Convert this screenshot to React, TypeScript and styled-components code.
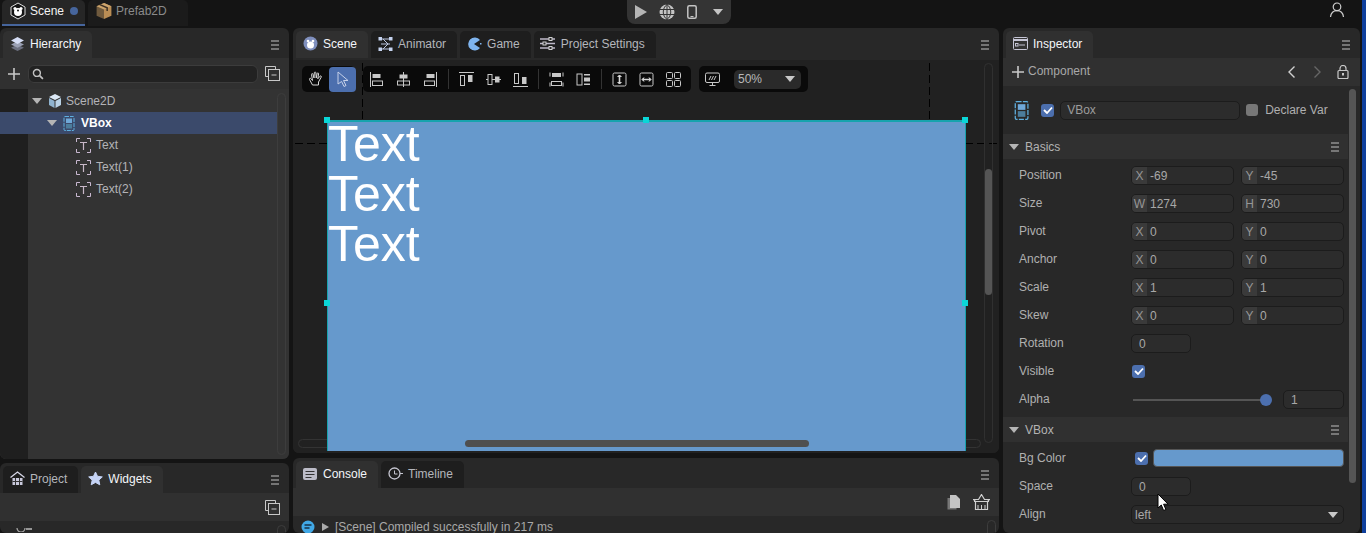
import React from "react";
import styled, { createGlobalStyle } from "styled-components";

const Global = createGlobalStyle`
  html, body { margin: 0; padding: 0; background: #141414; overflow: hidden; }
  body { font-family: "Liberation Sans", Arial, sans-serif; font-size: 12px; }
  * { box-sizing: border-box; }
`;

const Root = styled.div`
  position: relative;
  width: 1366px;
  height: 533px;
  display: flex;
  flex-direction: column;
  overflow: hidden;
  background: #141414;
`;
const EdgeStrip = styled.div`
  position: absolute;
  right: 0;
  top: 0;
  bottom: 0;
  width: 4px;
  background: #0f3f9c;
`;
const TopBar = styled.header`
  position: relative;
  height: 28px;
  flex: none;
  display: flex;
  padding-left: 2px;
  gap: 3px;
`;
const DocTab = styled.div<{ $active?: boolean; $w: number }>`
  width: ${(p) => p.$w}px;
  height: 26px;
  display: flex;
  align-items: center;
  gap: 3px;
  padding: 0 0 2px 7px;
  font-size: 12px;
  color: ${(p) => (p.$active ? "#f2f2f2" : "#8b8b8b")};
  background: ${(p) => (p.$active ? "#262626" : "#1b1b1b")};
  border-bottom: 2px solid ${(p) => (p.$active ? "#46659c" : "#1b1b1b")};
  border-radius: 5px 5px 0 0;
`;
const Dot = styled.span`
  width: 8px;
  height: 8px;
  border-radius: 50%;
  background: #46659c;
  margin-left: 3px;
`;
const PlayBar = styled.div`
  position: absolute;
  left: 627px;
  top: 0;
  width: 104px;
  height: 24px;
  background: #343434;
  border-radius: 0 0 8px 8px;
  display: flex;
  align-items: center;
  padding-left: 1.5px;
`;
const PlayCell = styled.span`
  width: 25.5px;
  display: flex;
  align-items: center;
  justify-content: center;
`;
const UserSlot = styled.div`
  position: absolute;
  left: 1329px;
  top: 2px;
  display: flex;
`;
const Main = styled.main`
  display: flex;
  gap: 4px;
  width: 1360px;
  height: 505px;
`;
const Column = styled.div<{ $w: number; $gap: number }>`
  width: ${(p) => p.$w}px;
  flex: none;
  display: flex;
  flex-direction: column;
  gap: ${(p) => p.$gap}px;
`;
const Panel = styled.section<{ $h: number }>`
  height: ${(p) => p.$h}px;
  flex: none;
  background: #282828;
  border-radius: 6px;
  display: flex;
  flex-direction: column;
  overflow: hidden;
`;
const TabHeader = styled.div`
  height: 30px;
  flex: none;
  display: flex;
  align-items: flex-end;
  gap: 3px;
  padding-left: 3px;
  position: relative;
`;
const Tab = styled.div<{ $active?: boolean }>`
  height: 27px;
  display: flex;
  align-items: center;
  gap: 5px;
  padding: 0 11px 2px 6px;
  color: ${(p) => (p.$active ? "#f4f6fa" : "#b4b6bc")};
  background: ${(p) => (p.$active ? "#303030" : "#1e1e1e")};
  border-radius: 5px 5px 0 0;
`;
const TabIconBox = styled.span`
  width: 16px;
  height: 16px;
  display: flex;
  align-items: center;
  justify-content: center;
`;
const MenuSlot = styled.span`
  margin-left: auto;
  margin-right: 10px;
  align-self: center;
  margin-top: 3px;
  display: flex;
`;
const ToolStrip = styled.div<{ $h: number }>`
  height: ${(p) => p.$h}px;
  flex: none;
  background: #303030;
  display: flex;
  align-items: center;
`;
const PlusSlot = styled.span<{ $w?: number }>`
  width: ${(p) => p.$w ?? 28}px;
  display: flex;
  justify-content: center;
`;
const SearchBox = styled.div`
  width: 230px;
  height: 18px;
  background: #222;
  border: 1px solid #3c3c3c;
  border-radius: 6px;
  display: flex;
  align-items: center;
  padding-left: 3px;
`;
const RightAction = styled.span<{ $mr: number; $auto?: boolean }>`
  margin-left: ${(p) => (p.$auto ? "auto" : "0")};
  margin-right: ${(p) => p.$mr}px;
  display: flex;
`;
const TreeArea = styled.div`
  flex: 1;
  display: flex;
  background: #333;
  position: relative;
`;
const Gutter = styled.div`
  width: 28px;
  background: #1f1f1f;
`;
const TreeList = styled.div`
  position: absolute;
  left: 0;
  top: 0;
  width: 277px;
  padding-top: 1px;
`;
const TreeRow = styled.div<{ $indent: number; $sel?: boolean }>`
  height: 22px;
  padding-left: ${(p) => p.$indent}px;
  display: flex;
  align-items: center;
  color: ${(p) => (p.$sel ? "#fff" : "#b3b3b8")};
  font-weight: ${(p) => (p.$sel ? 700 : 400)};
  background: ${(p) => (p.$sel ? "#3b4a6b" : "transparent")};
`;
const Arrow = styled.span<{ $color?: string }>`
  width: 0;
  height: 0;
  border-left: 5px solid transparent;
  border-right: 5px solid transparent;
  border-top: 6px solid ${(p) => p.$color || "#b5b5b5"};
`;
const TreeIcon = styled.span<{ $ml: number; $mr: number }>`
  margin-left: ${(p) => p.$ml}px;
  margin-right: ${(p) => p.$mr}px;
  display: flex;
`;
const ScrollTrackV = styled.div<{ $right: number; $top: number; $bottom: number; $color?: string }>`
  position: absolute;
  right: ${(p) => p.$right}px;
  top: ${(p) => p.$top}px;
  bottom: ${(p) => p.$bottom}px;
  width: 9px;
  border: 1px solid ${(p) => p.$color ?? "#3d3d3d"};
  border-radius: 5px;
`;
const Canvas = styled.div`
  position: relative;
  margin-top: 2px;
  flex: 1;
  background: #212121;
  overflow: hidden;
`;
const ToolRow = styled.div`
  position: absolute;
  z-index: 3;
  left: 9px;
  top: 6px;
  display: flex;
  gap: 8px;
`;
const ToolGroup = styled.div<{ $w: number }>`
  height: 26px;
  background: #0a0a0a;
  border-radius: 5px;
  display: flex;
  align-items: center;
  width: ${(p) => p.$w}px;
`;
const ToolBtn = styled.span<{ $active?: boolean }>`
  width: 27px;
  height: 25px;
  flex: none;
  display: flex;
  align-items: center;
  justify-content: center;
  border-radius: 4px;
  background: ${(p) => (p.$active ? "#4c6fae" : "transparent")};
`;
const ToolSep = styled.span`
  width: 1px;
  height: 20px;
  margin: 0 4px;
  background: #333;
`;
const ZoomSelect = styled.div`
  width: 67px;
  height: 19px;
  margin-left: 8px;
  background: #2a2a2a;
  border-radius: 5px;
  color: #b8b8b8;
  display: flex;
  align-items: center;
  justify-content: space-between;
  padding: 0 6px 0 4px;
`;
const Guide = styled.div<{ $x: number; $y: number; $len: number; $v?: boolean }>`
  position: absolute;
  left: ${(p) => p.$x}px;
  top: ${(p) => p.$y}px;
  ${(p) =>
    p.$v
      ? `width:1px;height:${p.$len}px;background:repeating-linear-gradient(180deg,#000 0 8px,transparent 8px 12px);`
      : `height:1px;width:${p.$len}px;background:repeating-linear-gradient(90deg,#000 0 8px,transparent 8px 12px);`}
`;
const Stage = styled.div`
  position: absolute;
  left: 34px;
  top: 60px;
  width: 639px;
  height: 331px;
  background: #6699cc;
  border-top: 2px solid #17a3ad;
  border-left: 1px solid #17a3ad;
  border-right: 1px solid #17a3ad;
  color: #fff;
  font-size: 50px;
  line-height: 50px;
`;
const StageText = styled.div`
  margin-top: -3px;
`;
const Handle = styled.span<{ $x: number; $y: number }>`
  position: absolute;
  z-index: 2;
  left: ${(p) => p.$x - 3}px;
  top: ${(p) => p.$y - 3}px;
  width: 6px;
  height: 6px;
  background: #0ad6d8;
`;
const HTrack = styled.div`
  position: absolute;
  left: 5px;
  width: 683px;
  top: 379px;
  height: 9px;
  border: 1px solid #333;
  border-radius: 5px;
`;
const HThumb = styled.div`
  position: absolute;
  z-index: 2;
  left: 172px;
  width: 344px;
  top: 380px;
  height: 7px;
  background: #4f4f4f;
  border-radius: 4px;
`;
const VThumb = styled.div<{ $right: number; $top: number; $h: number }>`
  position: absolute;
  z-index: 2;
  right: ${(p) => p.$right}px;
  top: ${(p) => p.$top}px;
  height: ${(p) => p.$h}px;
  width: 7px;
  background: #555;
  border-radius: 4px;
`;
const LogArea = styled.div`
  position: relative;
  flex: 1;
  display: flex;
  align-items: flex-start;
  padding: 4px 0 0 8px;
  color: #a9a9a9;
`;
const LogTri = styled.span`
  width: 0;
  height: 0;
  margin: 3px 6px 0 7px;
  border-top: 4px solid transparent;
  border-bottom: 4px solid transparent;
  border-left: 7px solid #aaa;
`;
const ClippedIcons = styled.div`
  position: relative;
  flex: 1;
  padding-left: 15px;
  overflow: hidden;
`;
const Inspector = styled.div`
  position: relative;
  flex: 1;
  overflow: hidden;
`;
const InspBody = styled.div`
  width: 345px;
`;
const NameRow = styled.div`
  height: 48px;
  display: flex;
  align-items: center;
  padding-left: 11px;
`;
const NameInput = styled.div`
  width: 180px;
  height: 19px;
  margin-left: 6px;
  margin-right: 6px;
  background: #2c2c2c;
  border: 1px solid #1c1c1c;
  border-radius: 5px;
  color: #9c9c9c;
  display: flex;
  align-items: center;
  padding-left: 6px;
`;
const Check = styled.span<{ $ml?: number }>`
  width: 13px;
  height: 13px;
  margin-left: ${(p) => p.$ml ?? 0}px;
  border-radius: 3px;
  background: #4c6fae;
  display: flex;
  align-items: center;
  justify-content: center;
  flex: none;
`;
const GreyBox = styled.span`
  width: 12px;
  height: 12px;
  border-radius: 3px;
  background: #777;
  margin-right: 7px;
`;
const DeclareLabel = styled.span`
  color: #b0b0b0;
`;
const SectionHead = styled.div<{ $mt?: number }>`
  height: 25px;
  margin-top: ${(p) => p.$mt ?? 0}px;
  background: #303030;
  display: flex;
  align-items: center;
  padding-left: 6px;
  color: #b3b3b3;
`;
const SectionName = styled.span`
  margin-left: 6px;
`;
const PropRow = styled.div<{ $first?: boolean }>`
  height: ${(p) => (p.$first ? 30 : 28)}px;
  padding-top: ${(p) => (p.$first ? 2 : 0)}px;
  display: flex;
  align-items: center;
  padding-left: 16px;
`;
const PropLabel = styled.span`
  width: 112px;
  flex: none;
  color: #b0b0b0;
  margin-top: -1px;
`;
const FieldGrid = styled.div`
  display: flex;
  gap: 7px;
`;
const Field = styled.div<{ $w?: number }>`
  width: ${(p) => p.$w ?? 103}px;
  height: 19px;
  background: #2c2c2c;
  border: 1px solid #1c1c1c;
  border-radius: 5px;
  color: #a8a8a8;
  display: flex;
  align-items: center;
  overflow: hidden;
  padding-top: 1px;
`;
const Prefix = styled.span`
  width: 15px;
  height: 17px;
  margin-top: -1px;
  margin-right: 3px;
  background: #3a3a3a;
  color: #969696;
  text-align: center;
  line-height: 18px;
`;
const Plain = styled.span`
  padding-left: 7px;
`;
const Slider = styled.div`
  position: relative;
  width: 133px;
  height: 12px;
  margin-left: 2px;
  margin-right: 17px;
  margin-top: 2px;
  display: flex;
  align-items: center;
`;
const SliderLine = styled.span`
  display: block;
  width: 100%;
  height: 2px;
  background: #555;
`;
const SliderThumb = styled.span`
  position: absolute;
  right: -6px;
  top: 0;
  width: 12px;
  height: 12px;
  border-radius: 50%;
  background: #4c6fae;
`;
const Swatch = styled.div`
  width: 191px;
  height: 18px;
  margin-left: 5px;
  background: #6699cc;
  border: 1px solid #555;
  border-radius: 4px;
`;
const Select = styled.div`
  width: 213px;
  height: 19px;
  background: #2a2a2a;
  border: 1px solid #1c1c1c;
  border-radius: 5px;
  color: #a8a8a8;
  display: flex;
  align-items: center;
  justify-content: space-between;
  padding: 1px 5px 0 3px;
`;
const ComponentLabel = styled.span`
  color: #a8a8a8;
  margin-left: -5px;
  margin-top: -2px;
`;
const CursorSlot = styled.div`
  position: absolute;
  z-index: 10;
  left: 1157px;
  top: 493px;
  display: flex;
`;

const s = { fill: "none", stroke: "#c8c8c8", strokeWidth: 1 } as const;

const Menu = () => (
  <svg width="8" height="10" viewBox="0 0 8 10">
    <path d="M0 1h8M0 5h8M0 9h8" stroke="#8f8f8f" strokeWidth="1.6" />
  </svg>
);
const HexLogo = ({ size = 18 }: { size?: number }) => (
  <svg width={size} height={size} viewBox="0 0 18 18">
    <path d="M9 1l7 4v8l-7 4-7-4V5z" fill="#141414" stroke="#ddd" />
    <circle cx="6" cy="6.5" r="1.6" fill="#fff" />
    <circle cx="12" cy="6.5" r="1.6" fill="#fff" />
    <ellipse cx="9" cy="10" rx="4" ry="4" fill="#fff" />
    <circle cx="9" cy="8.5" r="1" fill="#141414" />
  </svg>
);
const PrefabIcon = () => (
  <svg width="18" height="18" viewBox="0 0 16 17">
    <path d="M8 1l7 3v9l-7 3z" fill="#b98d55" />
    <path d="M8 1L1 4v9l7 3z" fill="#6f5a3e" />
    <path d="M1 4l7 3 7-3-7-3z" fill="#cda46c" />
    <path d="M4 2.5l7 3v3" stroke="#3c3024" strokeWidth="1.4" fill="none" />
  </svg>
);
const Stack = () => (
  <svg width="15" height="15" viewBox="0 0 14 14">
    <path d="M7 8l6 3-6 3-6-3z" fill="#6c7080" />
    <path d="M7 5l6 3-6 3-6-3z" fill="#9aa0b4" />
    <path d="M7 1l6 3.2-6 3.2-6-3.2z" fill="#d5ddf5" />
  </svg>
);
const Plus = ({ size = 12 }: { size?: number }) => (
  <svg width={size} height={size} viewBox="0 0 12 12">
    <path d="M6 0v12M0 6h12" stroke="#c8c8c8" strokeWidth="1.6" />
  </svg>
);
const Search = () => (
  <svg width="12" height="12" viewBox="0 0 11 11">
    <circle cx="4.5" cy="4.5" r="3.2" fill="none" stroke="#c0c0c0" strokeWidth="1.3" />
    <path d="M7 7l3 3" stroke="#c0c0c0" strokeWidth="1.6" />
  </svg>
);
const Collapse = () => (
  <svg width="15" height="15" viewBox="0 0 15 15">
    <path d="M3.5 10.5H.5V.5h10v3" {...s} />
    <rect x="3.5" y="3.5" width="11" height="11" {...s} />
    <path d="M6.5 9h5" {...s} />
  </svg>
);
const Cube = () => (
  <svg width="16" height="16" viewBox="0 0 16 16">
    <path d="M8 1l6 3-6 3-6-3z" fill="#dbe8f5" />
    <path d="M2 5l5.5 3v7L2 12z" fill="#8fb3cf" />
    <path d="M14 5L8.5 8v7l5.5-3z" fill="#b9d2e6" />
  </svg>
);
const VBoxIcon = ({ h = 15 }: { h?: number }) => (
  <svg width={h * 0.8} height={h} viewBox="0 0 12 15">
    <rect x="1" y="0.5" width="10" height="14" rx="1" fill="none" stroke="#5fb0e0" strokeDasharray="4 1" />
    <rect x="3" y="2.5" width="6" height="4.5" fill="#6fa8d8" />
    <rect x="3" y="8" width="6" height="4.5" fill="#4c7d9c" />
  </svg>
);
const TextNode = () => (
  <svg width="15" height="15" viewBox="0 0 15 15">
    <path d="M.5 4V.5H4M11 .5h3.5V4M.5 11v3.5H4M11 14.5h3.5V11" fill="none" stroke="#c8b8d0" />
    <path d="M4 4.5h7M7.5 4.5V12" fill="none" stroke="#c8b8c8" strokeWidth="1.2" />
  </svg>
);
const House = () => (
  <svg width="15" height="15" viewBox="0 0 15 15">
    <path d="M.5 6.5L7.5 1l7 5.5" fill="none" stroke="#d6d6e6" strokeWidth="1.3" />
    <rect x="2.5" y="7" width="10" height="7" fill="#c9c9dc" />
    <path d="M5.5 7v7M9.5 7v7M2.5 10.5h10" stroke="#333" />
  </svg>
);
const Star = () => (
  <svg width="15" height="15" viewBox="0 0 15 15">
    <path d="M7.5 1l2 4.3 4.8.6-3.5 3.2 1 4.7-4.3-2.4-4.3 2.4 1-4.7L.7 5.9l4.8-.6z" fill="#c5d3f5" stroke="#c5d3f5" strokeLinejoin="round" />
  </svg>
);
const SceneBall = () => (
  <svg width="15" height="15" viewBox="0 0 15 15">
    <circle cx="7.5" cy="7.5" r="7" fill="#7f8fbd" />
    <ellipse cx="7.5" cy="9" rx="3.5" ry="3.5" fill="#fff" />
    <circle cx="5" cy="5" r="1.3" fill="#fff" />
    <circle cx="10" cy="5" r="1.3" fill="#fff" />
  </svg>
);
const AnimatorIcon = () => (
  <svg width="15" height="14" viewBox="0 0 15 14">
    <path d="M3 2h9M3 12h9M3 7h9M5 2l5 5-5 5" fill="none" stroke="#bcc6e0" />
    <rect x="0.5" y="0" width="3.5" height="3.5" fill="#c5d3f0" />
    <rect x="11" y="0" width="3.5" height="3.5" fill="#c5d3f0" />
    <rect x="0.5" y="10.5" width="3.5" height="3.5" fill="#c5d3f0" />
    <rect x="11" y="10.5" width="3.5" height="3.5" fill="#c5d3f0" />
  </svg>
);
const GameIcon = () => (
  <svg width="15" height="14" viewBox="0 0 15 14">
    <path d="M7 7L13 3A6.6 6.6 0 1 0 13 11z" fill="#7fb4ee" />
    <rect x="13" y="6" width="1.5" height="1.5" fill="#7fb4ee" />
  </svg>
);
const Sliders = () => (
  <svg width="15" height="13" viewBox="0 0 15 13">
    <path d="M0 2h15M0 6.5h15M0 11h15" stroke="#bdb8c8" strokeWidth="1.3" />
    <rect x="9" y="0.5" width="3" height="3" fill="#2a2a2a" stroke="#d0d0d0" />
    <rect x="3" y="5" width="3" height="3" fill="#2a2a2a" stroke="#d0d0d0" />
    <rect x="9" y="9.5" width="3" height="3" fill="#2a2a2a" stroke="#d0d0d0" />
  </svg>
);
const InspectorIcon = () => (
  <svg width="15" height="13" viewBox="0 0 15 13">
    <rect x="0.5" y="0.5" width="14" height="12" rx="1" fill="#333" stroke="#c5c5d5" />
    <path d="M0.5 3h14" stroke="#c5c5d5" strokeWidth="2" />
    <rect x="2.5" y="6.5" width="2.5" height="2.5" fill="none" stroke="#c5c5d5" />
    <path d="M6 8h6" stroke="#c5c5d5" />
  </svg>
);
const ConsoleIcon = () => (
  <svg width="14" height="12" viewBox="0 0 14 12">
    <rect x="0" y="0" width="14" height="12" rx="2" fill="#bcbcc8" />
    <path d="M2.5 3.5h9M2.5 6.5h9M2.5 9.5h6" stroke="#333" />
  </svg>
);
const Clock = () => (
  <svg width="15" height="13" viewBox="0 0 15 13">
    <circle cx="6.5" cy="6.5" r="5.5" fill="none" stroke="#c5c5d0" strokeWidth="1.3" />
    <path d="M6.5 3.5v3.5h3" fill="none" stroke="#c5c5d0" />
    <path d="M12 6.5h3" stroke="#c5c5d0" />
  </svg>
);
const Hand = () => (
  <svg width="16" height="16" viewBox="0 0 16 16">
    <path d="M4.5 14L1.5 8.5c-.5-1 .8-1.8 1.5-.8L4.5 9.5 3.5 3.5c-.2-1 1.3-1.3 1.5-.2L6 7 6.3 1.8c.1-1 1.5-1 1.6 0L8.2 7l1-4.5c.2-1 1.6-.7 1.4.3L9.8 7.8 12 5.2c.7-.8 1.8.1 1.2 1L10.5 11v3z" fill="none" stroke="#d8d8d8" strokeWidth="1" />
  </svg>
);
const Pointer = () => (
  <svg width="14" height="16" viewBox="0 0 14 16">
    <path d="M2 1l10 8.5H7.5l2.500 5-2 1-2.400-5L2 13z" fill="none" stroke="#c5d0e8" strokeWidth="1" />
  </svg>
);
const Align = ({ d }: { d: React.ReactNode }) => (
  <svg width="15" height="15" viewBox="0 0 15 15">
    {d}
  </svg>
);
const alignIcons: React.ReactNode[] = [
  <><path d="M1.5 0v15" {...s} /><rect x="3.5" y="2" width="8" height="4" fill="#c8c8c8" /><rect x="3.5" y="9" width="10" height="4.5" {...s} /></>,
  <><path d="M7.5 0v15" {...s} /><rect x="3.5" y="2.5" width="8" height="4" fill="#c8c8c8" /><rect x="1.5" y="9" width="12" height="4" {...s} /></>,
  <><path d="M13.5 0v15" {...s} /><rect x="3.5" y="2" width="8" height="4" fill="#c8c8c8" /><rect x="1.5" y="9" width="10" height="4.5" {...s} /></>,
  <><path d="M0 .5h15" {...s} /><rect x="1.5" y="3.5" width="4" height="10" {...s} /><rect x="9" y="3" width="4.5" height="7" fill="#c8c8c8" /></>,
  <><path d="M0 7.5h15" {...s} /><rect x="2" y="2.5" width="4" height="10" fill="#0a0a0a" stroke="#c8c8c8" /><rect x="9" y="4.5" width="4.5" height="6" fill="#c8c8c8" /></>,
  <><path d="M0 14.5h15" {...s} /><rect x="1.5" y="1.5" width="4" height="10" {...s} /><rect x="9" y="5" width="4.5" height="7" fill="#c8c8c8" /></>,
  <><path d="M1 .5v4M14 .5v4M1 10.5v4M14 10.5v4" {...s} /><rect x="3" y="1" width="9" height="4" fill="#c8c8c8" /><rect x="2.5" y="9.5" width="10" height="4" {...s} /></>,
  <><rect x="1" y="2" width="5" height="11" {...s} /><rect x="8" y="2" width="6" height="1.5" fill="#c8c8c8" /><rect x="8" y="5.5" width="6" height="4" fill="#c8c8c8" /><rect x="8" y="11.5" width="6" height="1.5" fill="#c8c8c8" /></>,
  <><rect x="1" y="1" width="13" height="13" rx="1.5" {...s} /><path d="M7.5 3.5v8" stroke="#d8d8d8" strokeWidth="1.6" /><path d="M5.5 5l2-2 2 2M5.5 10l2 2 2-2" fill="#d8d8d8" stroke="#d8d8d8" /></>,
  <><rect x="1" y="1" width="13" height="13" rx="1.5" {...s} /><path d="M3.5 7.5h8" stroke="#d8d8d8" strokeWidth="1.6" /><path d="M5 5.5l-2 2 2 2M10 5.5l2 2-2 2" fill="#d8d8d8" stroke="#d8d8d8" /></>,
  <><rect x="0.5" y="0.5" width="6" height="6" rx="1" {...s} /><rect x="8.5" y="0.5" width="6" height="6" rx="1" {...s} /><rect x="0.5" y="8.5" width="6" height="6" rx="1" {...s} /><rect x="8.5" y="8.5" width="6" height="6" rx="1" {...s} /></>,
];
const Monitor = () => (
  <svg width="15" height="15" viewBox="0 0 15 15">
    <rect x="0.5" y="1" width="14" height="9.5" rx="1.5" {...s} />
    <path d="M4 8l2-4M6.5 8l2-4M9 8l2-4M4.5 13.5h6M7.5 10.5v3" {...s} />
  </svg>
);
const Tick = () => (
  <svg width="10" height="8" viewBox="0 0 10 8">
    <path d="M1 4l3 3 5-5.5" fill="none" stroke="#fff" strokeWidth="1.8" />
  </svg>
);
const Globe = () => (
  <svg width="16" height="16" viewBox="0 0 16 16">
    <circle cx="8" cy="8" r="7.5" fill="#c4c4c4" />
    <path d="M0 5.5h16M0 10.5h16M8 0v16M8 .5c-5 3.5-5 11.5 0 15M8 .5c5 3.5 5 11.5 0 15" fill="none" stroke="#343434" />
  </svg>
);
const Phone = () => (
  <svg width="10" height="14" viewBox="0 0 10 14">
    <rect x="0.8" y="0.8" width="8.4" height="12.4" rx="1.5" fill="none" stroke="#c4c4c4" strokeWidth="1.5" />
    <path d="M3.5 11.5h3" stroke="#c4c4c4" />
  </svg>
);
const User = () => (
  <svg width="16" height="16" viewBox="0 0 16 16">
    <circle cx="8" cy="4.8" r="3.8" fill="none" stroke="#d0d0d0" strokeWidth="1.2" />
    <path d="M1.5 15c.5-4 3-6.3 6.5-6.3s6 2.3 6.5 6.3" fill="none" stroke="#d0d0d0" strokeWidth="1.2" />
  </svg>
);
const Chevron = ({ left, c }: { left?: boolean; c: string }) => (
  <svg width="9" height="12" viewBox="0 0 9 12">
    <path d={left ? "M7.5 .5L2 6l5.5 5.5" : "M1.5 .5L7 6l-5.5 5.5"} fill="none" stroke={c} strokeWidth="1.4" />
  </svg>
);
const Lock = () => (
  <svg width="12" height="14" viewBox="0 0 12 14">
    <rect x="1" y="5.5" width="10" height="8" rx="1" fill="none" stroke="#c8c8c8" strokeWidth="1.2" />
    <path d="M3 5.5V3.5a3 3 0 0 1 6 0v2" fill="none" stroke="#c8c8c8" strokeWidth="1.2" />
    <rect x="5" y="8" width="2" height="2.5" fill="#c8c8c8" />
  </svg>
);
const Copy = () => (
  <svg width="13" height="15" viewBox="0 0 13 15">
    <rect x="0.5" y="3" width="9" height="11.5" fill="#777" />
    <path d="M3 0h6l4 4v9H3z" fill="#c4c4c4" />
  </svg>
);
const Broom = () => (
  <svg width="17" height="16" viewBox="0 0 17 16">
    <path d="M8.5 .5l3 5h5l-2 2v8h-12v-8l-2-2h5z" fill="none" stroke="#d0d0d0" strokeWidth="1.2" />
    <path d="M1 7.5h15M5 11v4M8.5 11v4M12 11v4" stroke="#d0d0d0" />
  </svg>
);
const InfoBubble = () => (
  <svg width="14" height="14" viewBox="0 0 14 14">
    <circle cx="7" cy="7" r="6.5" fill="#41a8e6" />
    <path d="M3.5 5h7M3.5 8h5" stroke="#16324a" strokeWidth="1.4" />
  </svg>
);
const Cursor = () => (
  <svg width="12" height="19" viewBox="0 0 12 19">
    <path d="M1 1v14l3.3-3 2.3 5.5 2.3-1-2.3-5.3h4.5z" fill="#fff" stroke="#000" strokeWidth="1" />
  </svg>
);
const PartialIcon = () => (
  <svg width="20" height="4" viewBox="0 0 20 4">
    <path d="M2 0a4 4 0 0 0 8 0" fill="none" stroke="#aaa" strokeWidth="1.2" />
    <path d="M11 1h6" stroke="#bbb" strokeWidth="1.5" />
  </svg>
);

const pairs: [string, string, string, string, string][] = [
  ["Position", "X", "-69", "Y", "-45"],
  ["Size", "W", "1274", "H", "730"],
  ["Pivot", "X", "0", "Y", "0"],
  ["Anchor", "X", "0", "Y", "0"],
  ["Scale", "X", "1", "Y", "1"],
  ["Skew", "X", "0", "Y", "0"],
];

const PanelTab = ({ icon, label, active }: { icon: React.ReactNode; label: string; active?: boolean }) => (
  <Tab $active={active}>
    <TabIconBox>{icon}</TabIconBox>
    {label}
  </Tab>
);

export default function App() {
  return (
    <Root>
      <Global />
      <TopBar>
        <DocTab $active $w={83}>
          <HexLogo />
          Scene
          <Dot />
        </DocTab>
        <DocTab $w={100}>
          <PrefabIcon />
          Prefab2D
        </DocTab>
        <PlayBar>
          <PlayCell>
            <svg width="12" height="14" viewBox="0 0 12 14"><path d="M0 0l12 7-12 7z" fill="#b5b5b5" /></svg>
          </PlayCell>
          <PlayCell><Globe /></PlayCell>
          <PlayCell><Phone /></PlayCell>
          <PlayCell><Arrow $color="#c4c4c4" /></PlayCell>
        </PlayBar>
        <UserSlot><User /></UserSlot>
      </TopBar>
      <Main>
        <Column $w={289} $gap={4}>
          <Panel $h={431}>
            <TabHeader>
              <PanelTab icon={<Stack />} label="Hierarchy" active />
              <MenuSlot><Menu /></MenuSlot>
            </TabHeader>
            <ToolStrip $h={31}>
              <PlusSlot><Plus /></PlusSlot>
              <SearchBox><Search /></SearchBox>
              <RightAction $auto $mr={9}><Collapse /></RightAction>
            </ToolStrip>
            <TreeArea>
              <Gutter />
              <TreeList>
                <TreeRow $indent={32}>
                  <Arrow />
                  <TreeIcon $ml={5} $mr={3}><Cube /></TreeIcon>
                  Scene2D
                </TreeRow>
                <TreeRow $indent={47} $sel>
                  <Arrow />
                  <TreeIcon $ml={6} $mr={6}><VBoxIcon /></TreeIcon>
                  VBox
                </TreeRow>
                {["Text", "Text(1)", "Text(2)"].map((t) => (
                  <TreeRow $indent={76} key={t}>
                    <TreeIcon $ml={0} $mr={5}><TextNode /></TreeIcon>
                    {t}
                  </TreeRow>
                ))}
              </TreeList>
              <ScrollTrackV $right={3} $top={4} $bottom={4} />
            </TreeArea>
          </Panel>
          <Panel $h={70}>
            <TabHeader>
              <PanelTab icon={<House />} label="Project" />
              <PanelTab icon={<Star />} label="Widgets" active />
              <MenuSlot><Menu /></MenuSlot>
            </TabHeader>
            <ToolStrip $h={28}>
              <RightAction $auto $mr={9}><Collapse /></RightAction>
            </ToolStrip>
            <ClippedIcons>
              <PartialIcon />
              <ScrollTrackV $right={3} $top={4} $bottom={-8} />
            </ClippedIcons>
          </Panel>
        </Column>
        <Column $w={706} $gap={5}>
          <Panel $h={425}>
            <TabHeader>
              <PanelTab icon={<SceneBall />} label="Scene" active />
              <PanelTab icon={<AnimatorIcon />} label="Animator" />
              <PanelTab icon={<GameIcon />} label="Game" />
              <PanelTab icon={<Sliders />} label="Project Settings" />
              <MenuSlot><Menu /></MenuSlot>
            </TabHeader>
            <Canvas>
              <ToolRow>
                <ToolGroup $w={53}>
                  <ToolBtn><Hand /></ToolBtn>
                  <ToolBtn $active><Pointer /></ToolBtn>
                </ToolGroup>
                <ToolGroup $w={328}>
                  {alignIcons.slice(0, 3).map((d, i) => <ToolBtn key={i}><Align d={d} /></ToolBtn>)}
                  <ToolSep />
                  {alignIcons.slice(3, 6).map((d, i) => <ToolBtn key={i}><Align d={d} /></ToolBtn>)}
                  <ToolSep />
                  {alignIcons.slice(6, 8).map((d, i) => <ToolBtn key={i}><Align d={d} /></ToolBtn>)}
                  <ToolSep />
                  {alignIcons.slice(8).map((d, i) => <ToolBtn key={i}><Align d={d} /></ToolBtn>)}
                </ToolGroup>
                <ToolGroup $w={109}>
                  <ToolBtn><Monitor /></ToolBtn>
                  <ZoomSelect>50%<Arrow $color="#c8c8c8" /></ZoomSelect>
                </ToolGroup>
              </ToolRow>
              <Guide $v $x={69} $y={3} $len={57} />
              <Guide $v $x={636} $y={3} $len={57} />
              <Guide $x={2} $y={83} $len={32} />
              <Guide $x={672} $y={83} $len={32} />
              <ScrollTrackV $right={6} $top={3} $bottom={10} $color="#303030" />
              <VThumb $right={7} $top={109} $h={126} />
              <HTrack />
              <Stage>
                <StageText>
                  <div>Text</div>
                  <div>Text</div>
                  <div>Text</div>
                </StageText>
              </Stage>
              <HThumb />
              <Handle $x={34} $y={60} />
              <Handle $x={353} $y={60} />
              <Handle $x={672} $y={60} />
              <Handle $x={34} $y={243} />
              <Handle $x={672} $y={243} />
            </Canvas>
          </Panel>
          <Panel $h={75}>
            <TabHeader>
              <PanelTab icon={<ConsoleIcon />} label="Console" active />
              <PanelTab icon={<Clock />} label="Timeline" />
              <MenuSlot><Menu /></MenuSlot>
            </TabHeader>
            <ToolStrip $h={28}>
              <RightAction $auto $mr={13}><Copy /></RightAction>
              <RightAction $mr={9}><Broom /></RightAction>
            </ToolStrip>
            <LogArea>
              <InfoBubble />
              <LogTri />
              [Scene] Compiled successfully in 217 ms
              <ScrollTrackV $right={3} $top={4} $bottom={-8} />
            </LogArea>
          </Panel>
        </Column>
        <Column $w={357} $gap={0}>
          <Panel $h={505}>
            <TabHeader>
              <PanelTab icon={<InspectorIcon />} label="Inspector" active />
              <MenuSlot><Menu /></MenuSlot>
            </TabHeader>
            <ToolStrip $h={28}>
              <PlusSlot $w={30}><Plus /></PlusSlot>
              <ComponentLabel>Component</ComponentLabel>
              <RightAction $auto $mr={17}><Chevron left c="#d0d0d0" /></RightAction>
              <RightAction $mr={15}><Chevron c="#666" /></RightAction>
              <RightAction $mr={11}><Lock /></RightAction>
            </ToolStrip>
            <Inspector>
              <InspBody>
                <NameRow>
                  <VBoxIcon h={19} />
                  <Check $ml={12}><Tick /></Check>
                  <NameInput>VBox</NameInput>
                  <GreyBox />
                  <DeclareLabel>Declare Var</DeclareLabel>
                </NameRow>
                <SectionHead>
                  <Arrow />
                  <SectionName>Basics</SectionName>
                  <RightAction $auto $mr={9}><Menu /></RightAction>
                </SectionHead>
                {pairs.map((p, i) => (
                  <PropRow key={p[0]} $first={i === 0}>
                    <PropLabel>{p[0]}</PropLabel>
                    <FieldGrid>
                      <Field><Prefix>{p[1]}</Prefix>{p[2]}</Field>
                      <Field><Prefix>{p[3]}</Prefix>{p[4]}</Field>
                    </FieldGrid>
                  </PropRow>
                ))}
                <PropRow>
                  <PropLabel>Rotation</PropLabel>
                  <Field $w={60}><Plain>0</Plain></Field>
                </PropRow>
                <PropRow>
                  <PropLabel>Visible</PropLabel>
                  <Check $ml={1}><Tick /></Check>
                </PropRow>
                <PropRow>
                  <PropLabel>Alpha</PropLabel>
                  <Slider>
                    <SliderLine />
                    <SliderThumb />
                  </Slider>
                  <Field $w={61}><Plain>1</Plain></Field>
                </PropRow>
                <SectionHead $mt={4}>
                  <Arrow />
                  <SectionName>VBox</SectionName>
                  <RightAction $auto $mr={9}><Menu /></RightAction>
                </SectionHead>
                <PropRow $first>
                  <PropLabel>Bg Color</PropLabel>
                  <Check $ml={4}><Tick /></Check>
                  <Swatch />
                </PropRow>
                <PropRow>
                  <PropLabel>Space</PropLabel>
                  <Field $w={60}><Plain>0</Plain></Field>
                </PropRow>
                <PropRow>
                  <PropLabel>Align</PropLabel>
                  <Select>left<Arrow $color="#c8c8c8" /></Select>
                </PropRow>
              </InspBody>
              <VThumb $right={4} $top={3} $h={394} />
            </Inspector>
          </Panel>
        </Column>
      </Main>
      <EdgeStrip />
      <CursorSlot><Cursor /></CursorSlot>
    </Root>
  );
}
